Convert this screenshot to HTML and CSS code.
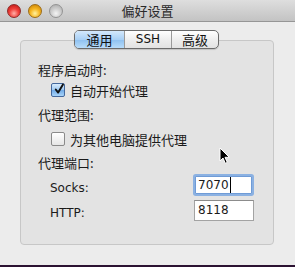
FILE: index.html
```html
<!DOCTYPE html>
<html lang="zh-CN">
<head>
  <meta charset="UTF-8" />
  <meta name="viewport" content="width=device-width, initial-scale=1" />
  <title>偏好设置</title>
  <link rel="stylesheet" href="styles.css">
</head>
<body>
  <div class="window">
    <header class="titlebar">
      <div class="lights">
        <span class="light red"></span>
        <span class="light yellow"></span>
        <span class="light gray"></span>
      </div>
      <div class="title">偏好设置</div>
      <div></div>
    </header>

    <main class="content">
      <nav class="tabs">
        <span class="tab tab-general active">通用</span>
        <span class="tab tab-ssh">SSH</span>
        <span class="tab tab-adv">高级</span>
      </nav>

      <section class="panel">
        <div class="label">程序启动时:</div>
        <div class="check">
          <span class="box checked">
            <svg width="13" height="13" viewBox="0 0 13 13"><path d="M3 6.5 L5.6 9.8 L10.8 1.2" fill="none" stroke="#111" stroke-width="2.1" stroke-linecap="round" stroke-linejoin="round"/></svg>
          </span>
          <span>自动开始代理</span>
        </div>

        <div class="label gap5">代理范围:</div>
        <div class="check gap4">
          <span class="box"></span>
          <span>为其他电脑提供代理</span>
        </div>

        <div class="label gap4">代理端口:</div>
        <div class="port">
          <span class="port-name">Socks:</span>
          <span class="field focus">7070<i class="caret"></i></span>
        </div>
        <div class="port port-http">
          <span class="port-name">HTTP:</span>
          <span class="field">8118</span>
        </div>
      </section>
    </main>

    <!-- mouse pointer sitting over the panel -->
    <svg class="pointer" width="12" height="18" viewBox="0 0 12 18">
      <path d="M1 1 L1 14 L4 11 L6.3 16.3 L8.3 15.4 L6 10.3 L10.3 10.3 Z" fill="#000" stroke="#fff" stroke-width="1"/>
    </svg>
  </div>
</body>
</html>
```

FILE: styles.css
```css
body {
  margin: 0;
  padding: 0;
  background: #2b1232;
  font-family: 'Noto Sans CJK SC', 'DejaVu Sans', sans-serif;
  color: #1a1a1a;
}
.window {
  position: relative;
  width: 295px;
  height: 265px;
  background: #ececec;
  overflow: hidden;
}
.titlebar {
  height: 21px;
  display: grid;
  grid-template-columns: 1fr auto 1fr;
  align-items: center;
  background: linear-gradient(#dedede, #c3c3c3);
  border-bottom: 1px solid #969696;
}
.lights {
  display: flex;
  gap: 7px;
  padding-left: 7px;
}
.light {
  width: 14px;
  height: 14px;
  border-radius: 50%;
  box-sizing: border-box;
}
.light.red {
  background: radial-gradient(circle at 50% 70%, #ffb0a8 0%, #f0403a 45%, #b8100e 100%);
  border: 1px solid #8e2a28;
}
.light.yellow {
  background: radial-gradient(circle at 50% 70%, #fff2a0 0%, #f6b622 45%, #c27a00 100%);
  border: 1px solid #9c6c18;
}
.light.gray {
  background: radial-gradient(circle at 50% 70%, #f4f4f4 0%, #cfcfcf 45%, #a6a6a6 100%);
  border: 1px solid #939393;
}
.title {
  font-size: 13px;
  color: #2a2a2a;
  line-height: 21px;
}
.content {
  padding-top: 8px;
}
.tabs {
  position: relative;
  z-index: 1;
  display: flex;
  width: 145px;
  height: 19px;
  margin: 0 0 -9px 74px;
  box-sizing: border-box;
  border: 1px solid #6b6b6b;
  border-radius: 5px;
  overflow: hidden;
  background: linear-gradient(#ffffff, #ededed 55%, #e2e2e2);
  box-shadow: 0 1px 1px rgba(0,0,0,0.15);
}
.tab {
  display: flex;
  align-items: center;
  justify-content: center;
  font-size: 13px;
  line-height: 17px;
  color: #111;
  border-left: 1px solid #9a9a9a;
}
.tab-general {
  width: 49px;
  border-left: none;
}
.tab-ssh {
  width: 46px;
  font-family: 'DejaVu Sans', sans-serif;
  font-size: 12px;
}
.tab-adv {
  flex: 1;
}
.tab.active {
  background: linear-gradient(#d4e8fb, #a9d0f5 50%, #8dc0f0 51%, #b8dcfa);
}
.panel {
  height: 205px;
  margin: 0 21px 0 20px;
  box-sizing: border-box;
  padding-top: 19px;
  background: #e3e3e3;
  border: 1px solid #c7c7c7;
  border-radius: 4px;
  font-size: 13px;
}
.label {
  height: 20px;
  line-height: 20px;
  padding-left: 17px;
}
.check {
  height: 20px;
  display: flex;
  align-items: center;
  gap: 5px;
  padding-left: 30px;
}
.gap5 { margin-top: 5px; }
.gap4 { margin-top: 4px; }
.box {
  width: 14px;
  height: 14px;
  box-sizing: border-box;
  border: 1px solid #8a8a8a;
  border-radius: 2px;
  background: linear-gradient(#ffffff, #f2f2f2 50%, #e6e6e6);
  display: flex;
  align-items: center;
  justify-content: center;
}
.box.checked {
  border-color: #44689c;
  background: linear-gradient(#d8ebfc, #9ec9f2 50%, #6fa9e6 51%, #a8d4fa);
}
.box svg {
  margin: -2px -1px 0 1px;
}
.port {
  display: flex;
  align-items: center;
  justify-content: space-between;
  height: 24px;
  padding: 0 19px 0 29px;
}
.port-http {
  margin-top: 1px;
}
.port-name {
  font-family: 'DejaVu Sans', sans-serif;
  font-size: 12px;
  padding-top: 5px;
}
.field {
  width: 60px;
  height: 21px;
  box-sizing: border-box;
  border: 1px solid #a3a3a3;
  border-top-color: #8c8c8c;
  background: #fff;
  font-family: 'DejaVu Sans', sans-serif;
  font-size: 12px;
  line-height: 19px;
  padding-left: 3px;
  display: flex;
  align-items: center;
}
.field.focus {
  width: 57px;
  height: 18px;
  margin-right: 2px;
  border: 1px solid #6f9bd6;
  box-shadow: 0 0 0 2px rgba(110, 160, 225, 0.75);
  border-radius: 1px;
  padding-left: 2px;
}
.caret {
  display: inline-block;
  width: 1px;
  height: 16px;
  background: #000;
  margin-left: 1px;
}
.pointer {
  position: absolute;
  left: 219px;
  top: 147px;
}
```
